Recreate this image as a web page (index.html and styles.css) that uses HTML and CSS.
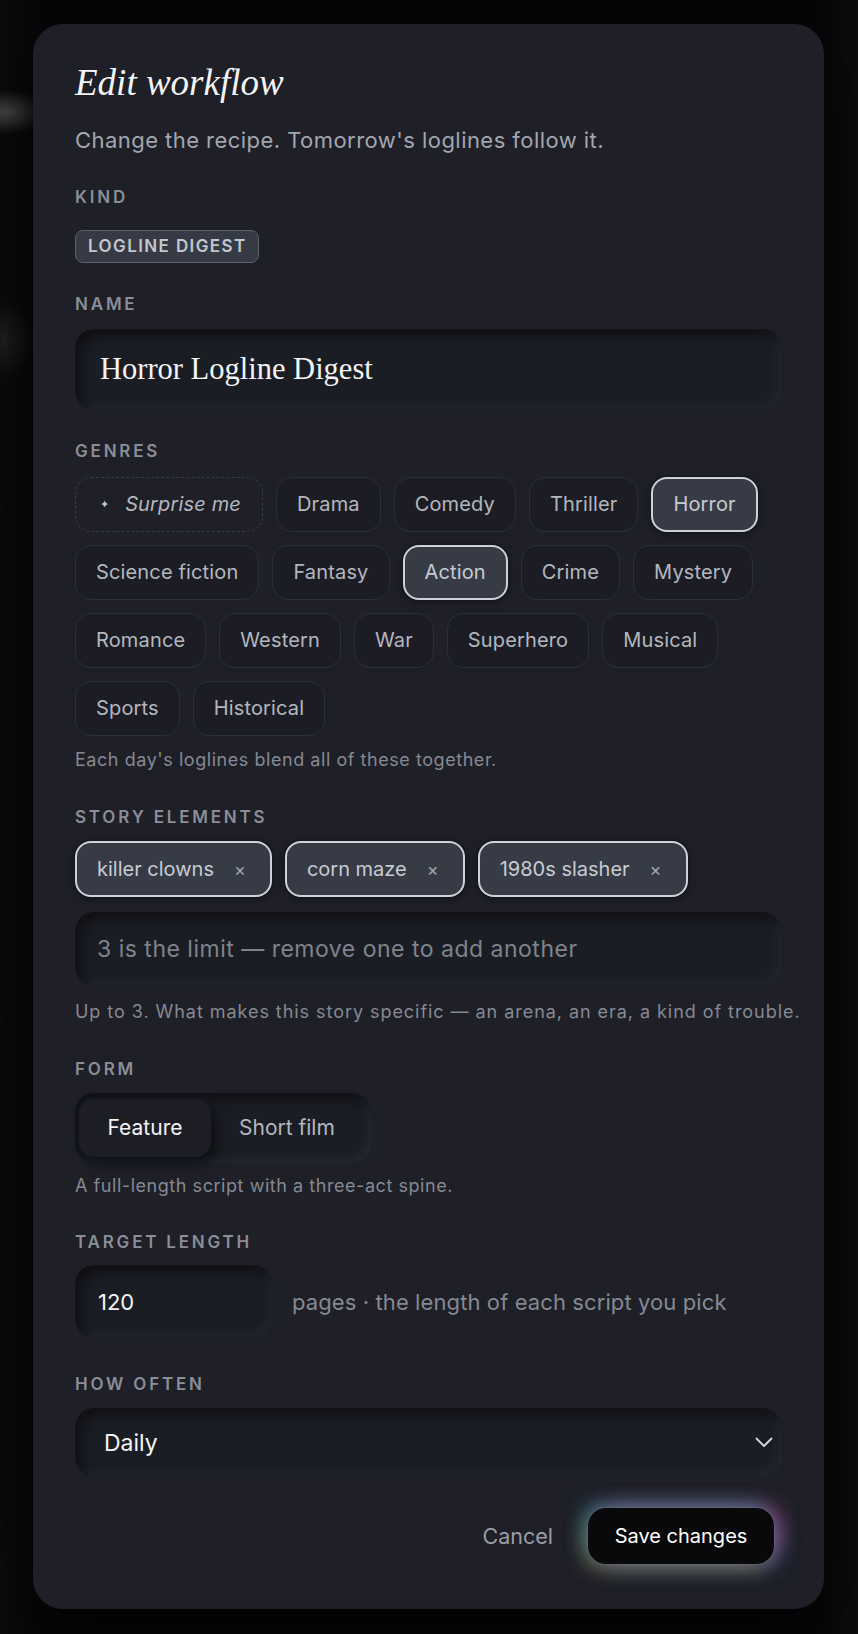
FILE: index.html
```html
<!DOCTYPE html>
<html lang="en">
<head>
<meta charset="utf-8">
<title>Edit workflow</title>
<link rel="stylesheet" href="styles.css">
</head>
<body>
<div class="backdrop">
  <section class="card">
    <h1 class="title">Edit workflow</h1>
    <p class="subtitle">Change the recipe. Tomorrow's loglines follow it.</p>

    <div class="field field-kind">
      <div class="label">Kind</div>
      <div class="badge">Logline digest</div>
    </div>

    <div class="field field-name">
      <div class="label">Name</div>
      <div class="inset name-input">Horror Logline Digest</div>
    </div>

    <div class="field field-genres">
      <div class="label">Genres</div>
      <div class="chips">
        <span class="chip chip-surprise"><span class="spark">✦</span><em>Surprise me</em></span>
        <span class="chip">Drama</span>
        <span class="chip">Comedy</span>
        <span class="chip">Thriller</span>
        <span class="chip is-on">Horror</span>
        <span class="chip">Science fiction</span>
        <span class="chip">Fantasy</span>
        <span class="chip is-on">Action</span>
        <span class="chip">Crime</span>
        <span class="chip">Mystery</span>
        <span class="chip">Romance</span>
        <span class="chip">Western</span>
        <span class="chip">War</span>
        <span class="chip">Superhero</span>
        <span class="chip">Musical</span>
        <span class="chip">Sports</span>
        <span class="chip">Historical</span>
      </div>
      <p class="help help-chips">Each day's loglines blend all of these together.</p>
    </div>

    <div class="field field-story">
      <div class="label">Story elements</div>
      <div class="tags">
        <span class="tag">killer clowns<span class="x">×</span></span>
        <span class="tag">corn maze<span class="x">×</span></span>
        <span class="tag">1980s slasher<span class="x">×</span></span>
      </div>
      <div class="inset text-input placeholder">3 is the limit — remove one to add another</div>
      <p class="help help-story">Up to 3. What makes this story specific — an arena, an era, a kind of trouble.</p>
    </div>

    <div class="field field-form">
      <div class="label">Form</div>
      <div class="segmented">
        <span class="seg seg-on">Feature</span>
        <span class="seg">Short film</span>
      </div>
      <p class="help help-seg">A full-length script with a three-act spine.</p>
    </div>

    <div class="field field-target">
      <div class="label">Target length</div>
      <div class="length-row">
        <div class="inset number-input">120</div>
        <span class="unit">pages · the length of each script you pick</span>
      </div>
    </div>

    <div class="field field-often">
      <div class="label">How often</div>
      <div class="inset select">
        <span>Daily</span>
        <svg class="chev" width="18" height="11" viewBox="0 0 18 11" aria-hidden="true"><polyline points="1.5,1.5 9,9 16.5,1.5" fill="none" stroke="#d6d8de" stroke-width="1.8" stroke-linecap="round" stroke-linejoin="round"/></svg>
      </div>
    </div>

    <div class="actions">
      <span class="cancel">Cancel</span>
      <span class="save">Save changes</span>
    </div>
  </section>
</div>
</body>
</html>
```
FILE: styles.css
```css
* { box-sizing: border-box; }

html, body {
  margin: 0;
  padding: 0;
}

body {
  background: #08080a;
  font-family: Inter, "Liberation Sans", sans-serif;
  color: #e9eaee;
  min-height: 1634px;
}

.backdrop {
  min-height: 1634px;
  padding: 24px 34px 26px 33px;
  background:
    radial-gradient(ellipse 40px 22px at 6px 112px, rgba(120,120,124,0.55), rgba(120,120,124,0) 100%),
    radial-gradient(ellipse 30px 40px at 4px 340px, rgba(90,90,96,0.25), rgba(90,90,96,0) 100%),
    linear-gradient(90deg, #0b0b0d 0, #060608 40px, #060608 calc(100% - 40px), #0d0d10 100%);
}

.card {
  width: 791px;
  background: #1e1f27;
  border-radius: 30px;
  padding: 37px 42px 45px 42px;
  box-shadow: 0 20px 60px rgba(0,0,0,0.6);
}

.title {
  margin: 0;
  font-family: "Liberation Serif", serif;
  font-style: italic;
  font-weight: 400;
  font-size: 37px;
  line-height: 43px;
  color: #f4f4f6;
}

.subtitle {
  margin: 22.5px 0 0;
  font-size: 22px;
  line-height: 27px;
  letter-spacing: 0.45px;
  color: #a3a6af;
}

.field-kind { margin-top: 33px; }
.field-name { margin-top: 31px; }
.field-genres { margin-top: 31px; }
.field-story { margin-top: 35px; }
.field-form { margin-top: 35px; }
.field-target { margin-top: 34px; }
.field-often { margin-top: 36px; }

.label {
  font-size: 17px;
  line-height: 20px;
  font-weight: 600;
  letter-spacing: 2.8px;
  text-transform: uppercase;
  color: #8b8e98;
}

.badge {
  display: flex;
  align-items: center;
  width: fit-content;
  height: 33px;
  margin-top: 23px;
  padding: 0 11px 0 12px;
  border: 1px solid #5c616d;
  border-radius: 8px;
  background: #363a45;
  font-size: 17px;
  line-height: 20px;
  font-weight: 600;
  letter-spacing: 1.4px;
  text-transform: uppercase;
  color: #c4c7ce;
}

.inset {
  background: #1b1d24;
  border-radius: 20px;
  box-shadow:
    inset 7px 7px 12px rgba(0,0,0,0.42),
    inset -5px -5px 10px rgba(70,78,94,0.18);
}

.name-input {
  margin-top: 15px;
  height: 81px;
  display: flex;
  align-items: center;
  padding: 0 25px;
  font-family: "Liberation Serif", serif;
  font-size: 30.5px;
  color: #f4f4f6;
}

.chips {
  margin-top: 16px;
  display: flex;
  flex-wrap: wrap;
  gap: 13px 13px;
}

.chip {
  height: 55px;
  display: inline-flex;
  align-items: center;
  padding: 0 20px;
  border: 1px solid #2d2f38;
  border-radius: 16px;
  background: #1c1d24;
  font-size: 20px;
  letter-spacing: 0.15px;
  color: #b4b7bf;
}

.chip.is-on {
  background: #363b46;
  border: 2px solid #cdd0d7;
  color: #c8cbd2;
  box-shadow: 0 0 0 1px rgba(20,22,28,0.8), 0 2px 8px rgba(0,0,0,0.35);
}

.chip-surprise {
  border: 1px dashed #383a44;
  background: transparent;
  padding: 0 21px 0 24px;
}

.chip-surprise .spark {
  font-size: 11px;
  color: #c3c6cd;
  margin-right: 16px;
}

.chip-surprise em {
  font-style: italic;
  color: #b4b7bf;
}

.help {
  margin: 0;
  font-size: 18px;
  line-height: 24px;
  letter-spacing: 0.55px;
  white-space: nowrap;
  color: #868993;
}
.help-chips { margin-top: 12.5px; }
.help-story { margin-top: 13.5px; letter-spacing: 0.95px; }
.help-seg { margin-top: 11.5px; }

.tags {
  margin-top: 14px;
  display: flex;
  gap: 13px;
}

.tag {
  height: 56px;
  display: inline-flex;
  align-items: center;
  padding: 0 24px 0 20px;
  background: #363b46;
  border: 2px solid #cfd2d9;
  border-radius: 16px;
  box-shadow: 0 0 0 1px rgba(20,22,28,0.8), 0 2px 8px rgba(0,0,0,0.35);
  font-size: 20px;
  color: #c8cbd2;
}

.tag .x {
  margin-left: 20px;
  font-size: 18px;
  color: #a2a5ad;
}

.text-input {
  margin-top: 15px;
  height: 74px;
  display: flex;
  align-items: center;
  padding: 0 22px;
  font-size: 23px;
  letter-spacing: 0.5px;
}

.placeholder { color: #7f838c; }

.segmented {
  margin-top: 14px;
  width: 297px;
  height: 70px;
  display: flex;
  align-items: center;
  padding: 0 4px;
  border-radius: 20px;
  background: #1b1d24;
  box-shadow:
    inset 7px 7px 12px rgba(0,0,0,0.42),
    inset -5px -5px 10px rgba(70,78,94,0.2);
}

.seg {
  height: 58px;
  display: inline-flex;
  align-items: center;
  justify-content: center;
  padding: 0 28px;
  border-radius: 15px;
  font-size: 21px;
  color: #b4b7bf;
}

.seg-on {
  width: 132px;
  background: #1d1e25;
  color: #f4f4f6;
  box-shadow:
    5px 6px 12px rgba(0,0,0,0.5),
    -2px -2px 6px rgba(60,66,80,0.15);
}

.length-row {
  margin-top: 13px;
  display: flex;
  align-items: center;
  gap: 19px;
}

.number-input {
  width: 198px;
  height: 73px;
  display: flex;
  align-items: center;
  padding: 0 23px;
  font-size: 22px;
  color: #f4f4f6;
}

.unit {
  font-size: 22px;
  letter-spacing: 0.1px;
  color: #868993;
}

.select {
  margin-top: 14px;
  height: 69px;
  display: flex;
  align-items: center;
  justify-content: space-between;
  padding: 0 9px 0 29px;
  font-size: 23px;
  color: #f4f4f6;
}

.actions {
  margin-top: 31px;
  display: flex;
  justify-content: flex-end;
  align-items: center;
  gap: 35px;
  padding-right: 8px;
}

.cancel {
  font-size: 21.5px;
  color: #9a9da6;
}

.save {
  height: 56px;
  width: 186px;
  display: inline-flex;
  align-items: center;
  justify-content: center;
  border-radius: 18px;
  background: #09090b;
  font-size: 20px;
  color: #ffffff;
  box-shadow:
    0 0 0 1px rgba(255,255,255,0.06),
    -7px -6px 18px rgba(70,170,190,0.42),
    9px -6px 18px rgba(200,90,170,0.4),
    -6px 8px 18px rgba(190,170,90,0.34),
    9px 8px 18px rgba(90,140,200,0.3);
}
```
